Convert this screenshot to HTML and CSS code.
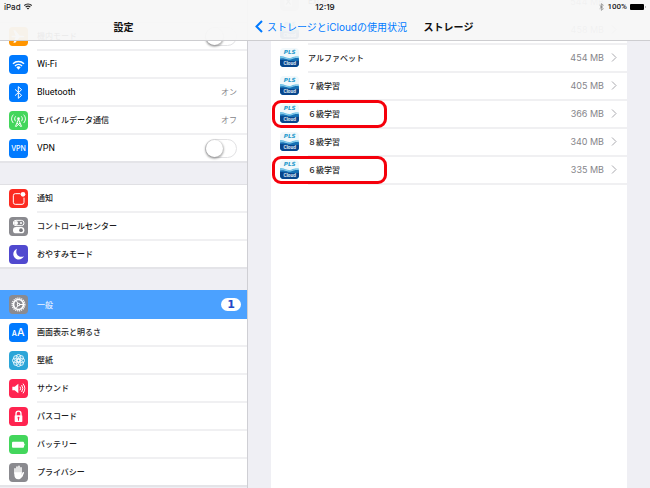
FILE: index.html
```html
<!DOCTYPE html>
<html lang="ja">
<head>
    <meta charset="UTF-8">
    <meta name="viewport" content="width=device-width, initial-scale=1.0">
    <title>設定</title>
    <link rel="stylesheet" href="styles.css">
</head>
<body>
    <!-- shared app icon -->
    <svg class="defs" aria-hidden="true">
        <symbol id="pls" viewBox="0 0 57 57">
            <rect width="57" height="57" rx="12" fill="#f1f8fb"/>
            <path d="M0 25c14-3 20 9 34 4 10-4 16-4 23-3v19a12 12 0 0 1-12 12H12A12 12 0 0 1 0 45z" fill="#4fb3df"/>
            <path d="M0 31c14-5 22 8 36 2 9-4 15-3 21-2v14a12 12 0 0 1-12 12H12A12 12 0 0 1 0 45z" fill="#1670b4"/>
            <path d="M0 36c14-2 22 6 57 2v7a12 12 0 0 1-12 12H12A12 12 0 0 1 0 45z" fill="#08468c"/>
            <path d="M0 30c14-4 22 7 35 2 9-4 15-4 22-3" fill="none" stroke="#b5e0f4" stroke-width="2"/>
            <text x="29" y="19" class="pls-top">PLS</text>
            <text x="29" y="51" class="pls-bottom">Cloud</text>
        </symbol>
        <symbol id="chevron" viewBox="0 0 6 9">
            <path d="M1 .5l4 4-4 4" fill="none" stroke="#a9a9ae" stroke-width="1"/>
        </symbol>
    </svg>

    <div class="topbar">
        <div class="status">
            <div class="status-left">
                <span>iPad</span>
                <svg width="8" height="7" viewBox="0 0 24 20" fill="none" stroke="#222" stroke-width="3.5"><path d="M1 7c6-6 16-6 22 0M5 12c4-4 10-4 14 0"/><path d="M8 15c2-2 6-2 8 0l-4 4z" fill="#222" stroke="none"/></svg>
            </div>
            <span class="clock">12:19</span>
            <div class="status-right">
                <svg width="5" height="8" viewBox="0 0 15 24" fill="none" stroke="#777" stroke-width="2"><path d="M2 7l11 10-6 5V2l6 5L2 17"/></svg>
                <span>100%</span>
                <svg width="16" height="6" viewBox="0 0 16 6"><rect width="14" height="6" rx="1"/><path d="M15 2q1 1 0 2z"/></svg>
            </div>
        </div>
        <div class="nav">
            <h1>設定</h1>
            <div class="nav-detail">
                <a href="#" class="back">
                    <svg width="8" height="13" viewBox="0 0 8 13"><path d="M7 1L1.500 6.500 7 12" fill="none" stroke="#007aff" stroke-width="2"/></svg>
                    ストレージとiCloudの使用状況
                </a>
                <h2>ストレージ</h2>
            </div>
        </div>
    </div>

    <div class="panes">
        <nav class="sidebar">
            <div class="group">
                <div class="row">
                    <svg class="icon" viewBox="0 0 57 57"><rect width="57" height="57" rx="11" fill="#ff9500"/><path d="M8 26h12l-7-16h6l13 16h11q6 2.500 0 5H32L19 47h-6l7-16H8z" fill="#fff"/></svg>
                    <div class="row-body">
                        <label for="airplane">機内モード</label>
                        <input type="checkbox" id="airplane" class="switch">
                    </div>
                </div>
                <a href="#" class="row">
                    <svg class="icon" viewBox="0 0 57 57"><rect width="57" height="57" rx="11" fill="#007aff"/><g fill="none" stroke="#fff" stroke-width="4.500"><path d="M12 26c9-9 24-9 33 0M18 33c6-6 15-6 21 0"/></g><path d="M22 37c4-4 9-4 13 0l-6.500 7z" fill="#fff"/></svg>
                    <div class="row-body"><span class="latin">Wi-Fi</span></div>
                </a>
                <a href="#" class="row">
                    <svg class="icon" viewBox="0 0 57 57"><rect width="57" height="57" rx="11" fill="#007aff"/><path d="M18 19l20 18-10 9V11l10 9-20 18" fill="none" stroke="#fff" stroke-width="3"/></svg>
                    <div class="row-body"><span class="latin">Bluetooth</span> <span class="value">オン</span></div>
                </a>
                <a href="#" class="row">
                    <svg class="icon" viewBox="0 0 57 57"><rect width="57" height="57" rx="11" fill="#43d65c"/><g fill="none" stroke="#fff" stroke-width="3"><path d="M13 11c-7 8-7 17 0 25M20 16c-4 5-4 10 0 15M44 11c7 8 7 17 0 25M37 16c4 5 4 10 0 15M28.500 25L19 47M28.500 25L38 47M24 36l12 11M33 36L21 47"/></g><circle cx="28.500" cy="23" r="4" fill="#fff"/></svg>
                    <div class="row-body">モバイルデータ通信 <span class="value">オフ</span></div>
                </a>
                <div class="row">
                    <svg class="icon" viewBox="0 0 57 57"><rect width="57" height="57" rx="11" fill="#007aff"/><text x="28.500" y="37" class="vpn">VPN</text></svg>
                    <div class="row-body">
                        <label for="vpn" class="latin">VPN</label>
                        <input type="checkbox" id="vpn" class="switch">
                    </div>
                </div>
            </div>

            <div class="group">
                <a href="#" class="row">
                    <svg class="icon" viewBox="0 0 57 57"><rect width="57" height="57" rx="11" fill="#fc2a20"/><path d="M34 14H19q-6 0-6 6v20q0 6 6 6h20q6 0 6-6V26" fill="none" stroke="#fff" stroke-width="3"/><circle cx="42" cy="16" r="7" fill="#fff"/></svg>
                    <div class="row-body">通知</div>
                </a>
                <a href="#" class="row">
                    <svg class="icon" viewBox="0 0 57 57"><rect width="57" height="57" rx="11" fill="#8a8a8f"/><rect x="13" y="10" width="32" height="16" rx="8" fill="none" stroke="#fff" stroke-width="3"/><circle cx="21" cy="18" r="6" fill="#fff"/><circle cx="36" cy="18" r="3" fill="#fff"/><rect x="12" y="30" width="34" height="19" rx="9.500" fill="#fff"/><circle cx="36" cy="39.500" r="5.500" fill="#77777c"/></svg>
                    <div class="row-body">コントロールセンター</div>
                </a>
                <a href="#" class="row">
                    <svg class="icon" viewBox="0 0 57 57"><rect width="57" height="57" rx="11" fill="#5049cf"/><path d="M24 11C10 16 9 36 22 42c9 4 19 0 23-8-10 4-19 0-22-8-2-5-1-11 1-15z" fill="#fff"/></svg>
                    <div class="row-body">おやすみモード</div>
                </a>
            </div>

            <div class="group">
                <a href="#" class="row selected">
                    <svg class="icon" viewBox="0 0 57 57"><rect width="57" height="57" rx="11" fill="#8a8a8f"/><g fill="none" stroke="#fff"><circle cx="28.500" cy="28.500" r="19" stroke-width="4" stroke-dasharray="3.500 2.470"/><circle cx="28.500" cy="28.500" r="15" stroke-width="5"/><path d="M28.500 28.500h14M28.500 28.500l-7-12M28.500 28.500l-7 12" stroke-width="3"/></g><circle cx="28.500" cy="28.500" r="5" fill="#fff"/><circle cx="28.500" cy="28.500" r="2" fill="#8a8a8f"/></svg>
                    <div class="row-body">一般 <span class="badge">1</span></div>
                </a>
                <a href="#" class="row">
                    <svg class="icon" viewBox="0 0 57 57"><rect width="57" height="57" rx="11" fill="#007aff"/><text x="8" y="39" class="aa-small">A</text><text x="24" y="39" class="aa-large">A</text></svg>
                    <div class="row-body">画面表示と明るさ</div>
                </a>
                <a href="#" class="row">
                    <svg class="icon" viewBox="0 0 57 57"><rect width="57" height="57" rx="11" fill="#2ba5d8"/><g fill="none" stroke="#fff" stroke-width="2.500"><circle cx="28.500" cy="17.500" r="7"/><circle cx="36.300" cy="20.700" r="7"/><circle cx="39.500" cy="28.500" r="7"/><circle cx="36.300" cy="36.300" r="7"/><circle cx="28.500" cy="39.500" r="7"/><circle cx="20.700" cy="36.300" r="7"/><circle cx="17.500" cy="28.500" r="7"/><circle cx="20.700" cy="20.700" r="7"/><circle cx="28.500" cy="28.500" r="5"/></g></svg>
                    <div class="row-body">壁紙</div>
                </a>
                <a href="#" class="row">
                    <svg class="icon" viewBox="0 0 57 57"><rect width="57" height="57" rx="11" fill="#ff2450"/><path d="M10 23h7l11-9v29l-11-9h-7z" fill="#fff"/><g fill="none" stroke="#fff" stroke-width="3"><path d="M33 23q4 6 0 11M38 18q7 10 0 21M42 14q11 14 0 29"/></g></svg>
                    <div class="row-body">サウンド</div>
                </a>
                <a href="#" class="row">
                    <svg class="icon" viewBox="0 0 57 57"><rect width="57" height="57" rx="11" fill="#ff2450"/><path d="M21 26v-6c0-10 15-10 15 0v6" fill="none" stroke="#fff" stroke-width="4"/><rect x="17" y="25" width="23" height="20" rx="2" fill="#fff"/><circle cx="28.500" cy="32" r="3" fill="#ff2450"/><path d="M27 32h3v9h-3z" fill="#ff2450"/></svg>
                    <div class="row-body">パスコード</div>
                </a>
                <a href="#" class="row">
                    <svg class="icon" viewBox="0 0 57 57"><rect width="57" height="57" rx="11" fill="#43d65c"/><rect x="9" y="20" width="36" height="18" rx="3" fill="#fff"/><path d="M46 25q5 4 0 8z" fill="#fff"/></svg>
                    <div class="row-body">バッテリー</div>
                </a>
                <a href="#" class="row">
                    <svg class="icon" viewBox="0 0 57 57"><rect width="57" height="57" rx="11" fill="#8a8a8f"/><g fill="none" stroke="#fff" stroke-width="4.500" stroke-linecap="round"><path d="M18 31V17M24 29V12M30 29V10M36 30V14M43 29l-5 11"/></g><path d="M16 28h22v7l4-2c-2 8-5 16-14 16-8 0-12-7-12-14z" fill="#fff"/></svg>
                    <div class="row-body">プライバシー</div>
                </a>
            </div>
        </nav>

        <main class="detail">
            <div class="storage">
                <a href="#" class="row">
                    <svg class="icon" viewBox="0 0 57 57"><rect width="57" height="57" rx="11" fill="#d4d6d5"/><path d="M14 14h22v29H14z" fill="#fff"/><path d="M18 20l14 18M32 20L18 38" stroke="#8b918e" stroke-width="4"/></svg>
                    <div class="row-body">Excel <span class="value">544 MB</span><svg class="chevron"><use href="#chevron"/></svg></div>
                </a>
                <a href="#" class="row">
                    <svg class="icon"><use href="#pls"/></svg>
                    <div class="row-body"><span class="value">458 MB</span><svg class="chevron"><use href="#chevron"/></svg></div>
                </a>
                <a href="#" class="row">
                    <svg class="icon"><use href="#pls"/></svg>
                    <div class="row-body">アルファベット <span class="value">454 MB</span><svg class="chevron"><use href="#chevron"/></svg></div>
                </a>
                <a href="#" class="row">
                    <svg class="icon"><use href="#pls"/></svg>
                    <div class="row-body">７級学習 <span class="value">405 MB</span><svg class="chevron"><use href="#chevron"/></svg></div>
                </a>
                <a href="#" class="row marked">
                    <svg class="icon"><use href="#pls"/></svg>
                    <div class="row-body">６級学習 <span class="value">366 MB</span><svg class="chevron"><use href="#chevron"/></svg></div>
                </a>
                <a href="#" class="row">
                    <svg class="icon"><use href="#pls"/></svg>
                    <div class="row-body">８級学習 <span class="value">340 MB</span><svg class="chevron"><use href="#chevron"/></svg></div>
                </a>
                <a href="#" class="row marked">
                    <svg class="icon"><use href="#pls"/></svg>
                    <div class="row-body">６級学習 <span class="value">335 MB</span><svg class="chevron"><use href="#chevron"/></svg></div>
                </a>
            </div>
        </main>
    </div>
</body>
</html>
```
FILE: styles.css
```css
*,
*::before,
*::after {
    box-sizing: border-box;
}

body {
    margin: 0;
    height: 100vh;
    overflow: hidden;
    font-family: Inter, "Noto Sans CJK JP", sans-serif;
    font-size: 8px;
    font-weight: 500;
    color: #1c1c1e;
    background-color: #efeff4;
}

a {
    color: inherit;
    text-decoration: none;
}

.defs {
    position: absolute;
    width: 0;
    height: 0;
}

/* Status bar and titles, over the scrolled lists */
.topbar {
    position: absolute;
    top: 0;
    left: 0;
    right: 0;
    z-index: 2;
    background-color: rgba(247, 247, 247, 0.95);
    border-bottom: 1px solid #cdcdd0;
}

.status {
    display: grid;
    grid-template-columns: 1fr auto 1fr;
    align-items: center;
    height: 13px;
    padding: 0 4px;
}

.status-left,
.status-right {
    display: flex;
    align-items: center;
    gap: 3px;
}

.status-right {
    justify-content: flex-end;
    font-family: Roboto, sans-serif;
}

.clock {
    font-weight: 600;
}

.nav {
    display: grid;
    grid-template-columns: 38fr 62fr;
    align-items: center;
    height: 27px;
    font-size: 10px;
}

.nav h1,
.nav h2 {
    margin: 0;
    font-size: 10px;
    font-weight: 700;
    text-align: center;
    color: #111;
}

.nav-detail {
    display: grid;
    grid-template-columns: 1fr auto 1fr;
    align-items: center;
}

.back {
    display: flex;
    align-items: center;
    gap: 4px;
    padding-left: 8px;
    font-weight: 400;
    white-space: nowrap;
    color: #007aff;
}

.panes {
    display: grid;
    grid-template-columns: 38fr 62fr;
    height: 100%;
}

.sidebar {
    display: flex;
    flex-direction: column;
    gap: 21px;
    padding-top: 22px;
}

.group {
    background-color: #fff;
    border-top: 1px solid #e0e0e4;
}

.row {
    display: flex;
    align-items: center;
    gap: 9px;
    height: 28px;
    padding-left: 9px;
}

.icon {
    flex: none;
    width: 19px;
    height: 19px;
    margin-bottom: 1px;
}

.row-body {
    flex: 1;
    display: flex;
    align-items: center;
    height: 100%;
    padding: 0 10px 2px 0;
    border-bottom: 2px solid #f0f0f2;
}

.latin {
    font-family: Roboto, sans-serif;
    font-size: 9px;
    font-weight: 400;
    line-height: 12px;
    padding-top: 2px;
    color: #000;
}

.group .row:last-child {
    border-bottom: 2px solid #e4e4e8;
}

.group .row:last-child .row-body {
    border-bottom: 0;
}

.group .row:last-child .icon {
    margin-bottom: 0;
}

.value {
    margin-left: auto;
    font-weight: 400;
    color: #85858a;
}

.selected {
    height: 29px;
    margin-top: -1px;
    padding-top: 1px;
    color: #fff;
    background-color: #4ba1ff;
}

.selected .row-body {
    padding: 0 6px 0 0;
    font-weight: 400;
    border-color: #4ba1ff;
}

.badge {
    width: 20px;
    margin-left: auto;
    font-family: "DejaVu Sans", sans-serif;
    font-size: 11px;
    font-weight: 700;
    line-height: 13px;
    text-align: center;
    color: #2448c8;
    background-color: #fff;
    border-radius: 7px;
}

.switch {
    appearance: none;
    width: 32px;
    height: 19px;
    margin: 2px 0 0 auto;
    border: 1px solid #e2e2e4;
    border-radius: 10px;
    background-color: #fff;
}

.switch::before {
    content: "";
    display: block;
    width: 17px;
    height: 17px;
    border-radius: 50%;
    background-color: #fff;
    box-shadow: 0 1px 2px 1px rgba(0, 0, 0, 0.3);
}

.detail {
    padding: 0 23px;
    border-left: 1px solid #cfcfd4;
}

/* The list is scrolled up under the title bar */
.storage {
    height: 100%;
    margin-top: -11px;
    padding-bottom: 11px;
    box-sizing: content-box;
    background-color: #fff;
}

.storage .row {
    position: relative;
}

.storage .icon {
    margin-bottom: 3px;
}

.storage .value {
    font-size: 9px;
}

.chevron {
    width: 6px;
    height: 9px;
    margin-left: 7px;
}

.marked::after {
    content: "";
    position: absolute;
    top: -1px;
    left: 1px;
    width: 115px;
    height: 28px;
    border: 3px solid #f5000b;
    border-radius: 9px;
}

.pls-top {
    font-family: "DejaVu Sans", sans-serif;
    font-size: 17px;
    font-weight: 700;
    font-style: italic;
    text-anchor: middle;
    fill: #2298cc;
}

.pls-bottom {
    font-size: 13px;
    font-weight: 700;
    text-anchor: middle;
    fill: #e4f3fc;
}

.vpn {
    font-size: 21px;
    text-anchor: middle;
    fill: #fff;
}

.aa-small {
    font-size: 21px;
    font-weight: 600;
    fill: #fff;
}

.aa-large {
    font-size: 32px;
    fill: #fff;
}
```
